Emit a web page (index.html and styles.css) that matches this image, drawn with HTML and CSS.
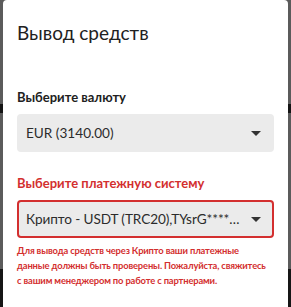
FILE: index.html
```html
<!DOCTYPE html>
<html>
    <head>
        <meta charset="utf-8">
        <link rel="stylesheet" href="styles.css">
    </head>
    <body>
        <div class="modal">
            <h2 class="title">Вывод средств</h2>

            <div class="field">
                <label class="label">Выберите валюту</label>
                <div class="select">
                    <span class="value">EUR (3140.00)</span>
                    <span class="arrow"></span>
                </div>
            </div>

            <div class="field error">
                <label class="label">Выберите платежную систему</label>
                <div class="select">
                    <span class="value">Крипто - USDT (TRC20),TYsrG****vPj9r</span>
                    <span class="arrow"></span>
                </div>
                <p class="helper">Для вывода средств через Крипто ваши платежные<br>данные должны быть проверены. Пожалуйста, свяжитесь<br>с вашим менеджером по работе с партнерами.</p>
            </div>
        </div>
    </body>
</html>
```

FILE: styles.css
```css
html, body {
    margin: 0;
    height: 100%;
}

body {
    font-family: Lato, "Noto Sans", sans-serif;
    color: #212121;
    background: linear-gradient(to bottom,
        #5b5b5b 0, #5b5b5b 104px,
        #141414 104px, #141414 113px,
        #5b5b5b 113px, #5b5b5b 269px,
        #161616 269px);
    overflow: hidden;
}

.modal {
    margin: 0 3px;
    height: 100%;
    background: #fff;
    border-radius: 4px 4px 0 0;
    padding: 0 14px;
    box-sizing: border-box;
}

.title {
    margin: 0;
    padding: 21px 0 0;
    font-size: 19px;
    font-weight: 400;
    line-height: 24px;
    height: 67px;
}

.field {
    margin-bottom: 22px;
}

.label {
    display: block;
    font-size: 13px;
    font-weight: 700;
    line-height: 18px;
    margin-bottom: 8px;
}

.select {
    display: flex;
    align-items: center;
    height: 38px;
    background: #ebebeb;
    border-radius: 4px;
    padding: 0 13px 0 9px;
    box-sizing: border-box;
}

.value {
    flex: 1;
    font-size: 13.6px;
    white-space: nowrap;
    overflow: hidden;
    text-overflow: ellipsis;
    color: #2b2b2b;
}

.error .value {
    letter-spacing: -0.1px;
}

.arrow {
    width: 0;
    height: 0;
    margin-left: 9px;
    border-left: 5px solid transparent;
    border-right: 5px solid transparent;
    border-top: 5px solid #333;
}

.error .label {
    color: #d32f2f;
}

.error .select {
    border: 2px solid #d32f2f;
    padding: 0 11px 0 7px;
}

.helper {
    margin: 5px 0 0;
    color: #d32f2f;
    font-size: 9.4px;
    font-weight: 700;
    letter-spacing: -0.15px;
    line-height: 15px;
    white-space: nowrap;
}
```
